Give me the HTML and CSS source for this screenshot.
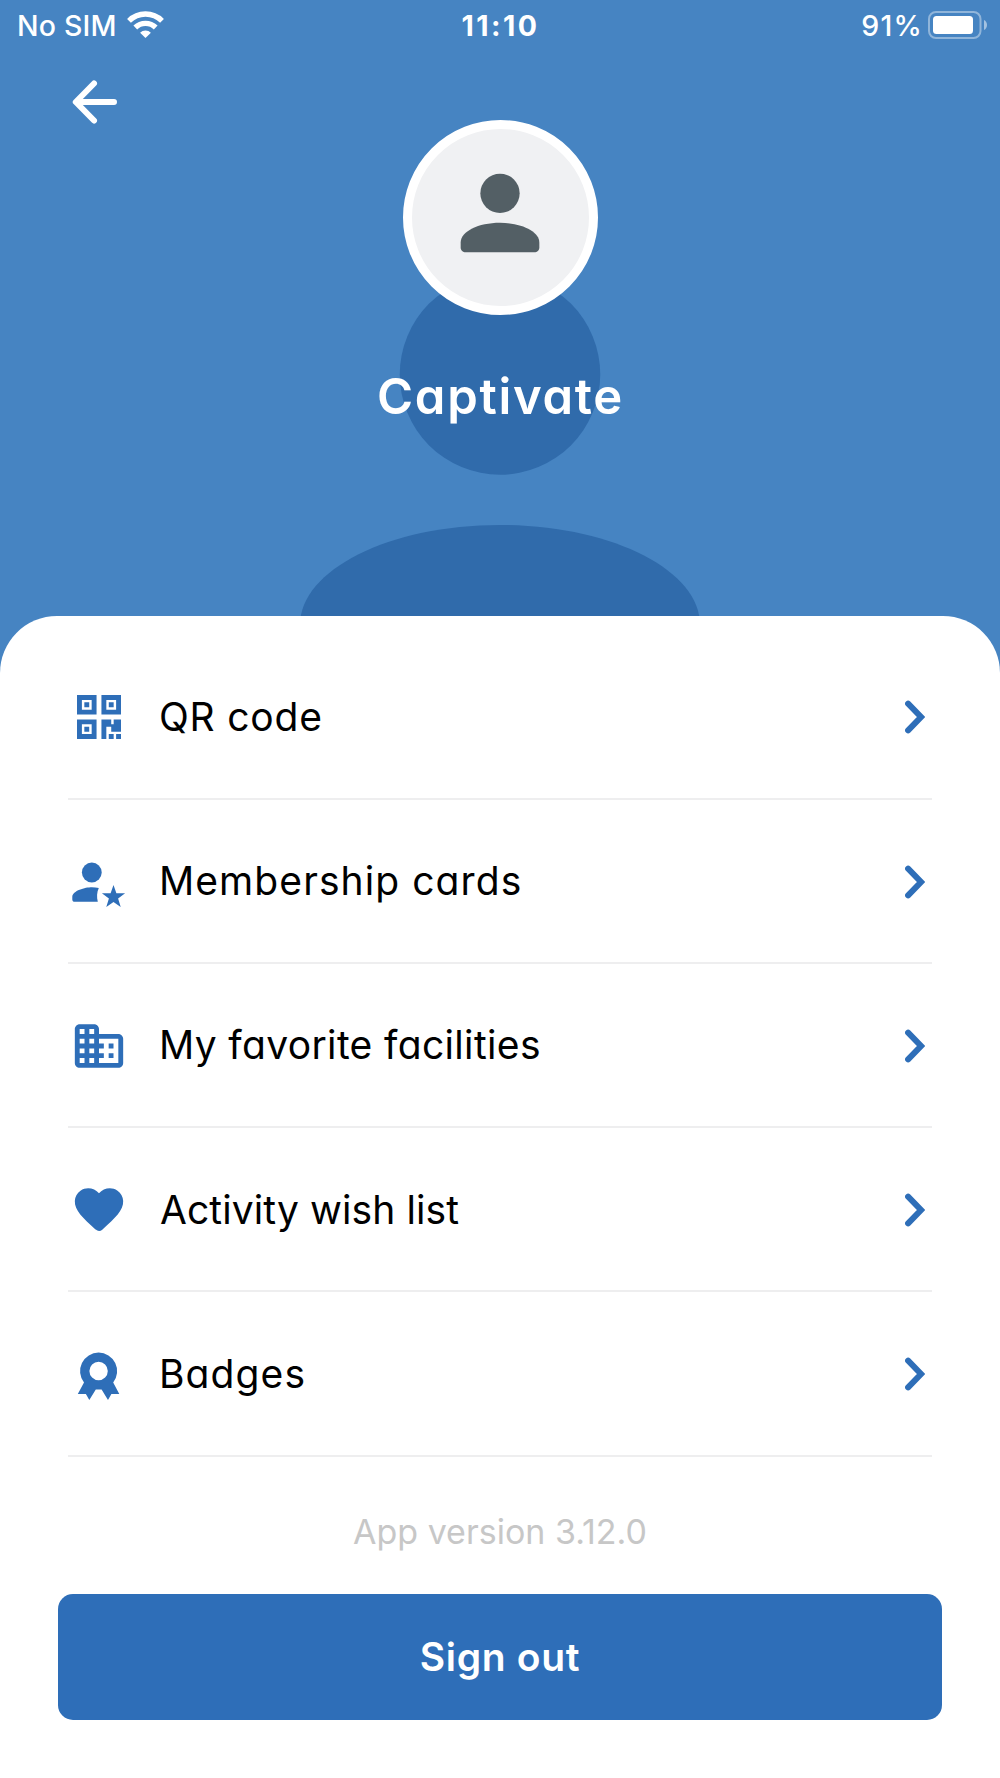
FILE: index.html
```
<!DOCTYPE html>
<html lang="en">
<head>
<meta charset="utf-8">
<title>Profile</title>
<link rel="stylesheet" href="styles.css">
</head>
<body>
<main class="screen">
  <header class="hero">
    <svg class="silhouette" viewBox="0 0 24 24" fill="currentColor"><circle cx="12" cy="7.980" r="4.010"/><path d="M4 18c0-2.210 3.580-4 8-4s8 1.790 8 4v1c0 .55-.45 1-1 1H5c-.55 0-1-.45-1-1z"/></svg>
    <div class="status">
      <div class="carrier">
        <span class="carrier-name">No SIM</span>
        <svg class="wifi" viewBox="0 0 37 27" fill="none" stroke="#fff" stroke-width="5.400">
          <path d="M2 9.800a23.400 23.400 0 0 1 33 0"/>
          <path d="M8.300 16.500a14.600 14.600 0 0 1 20.400 0"/>
          <path d="M18.500 27l-5.400-5.300a7.700 7.700 0 0 1 10.800 0z" fill="#fff" stroke="none"/>
        </svg>
      </div>
      <time class="clock">11:10</time>
      <div class="power">
        <span class="percent">91%</span>
        <svg class="battery" viewBox="0 0 60 28">
          <rect x="1" y="1" width="51.500" height="26" rx="7" fill="none" stroke="#fff" stroke-opacity=".4" stroke-width="2"/>
          <rect x="5" y="5" width="40" height="18" rx="3.500" fill="#fff"/>
          <path d="M56 9v10c1.900-.900 3-2.800 3-5s-1.100-4.100-3-5z" fill="#fff" fill-opacity=".5"/>
        </svg>
      </div>
    </div>
    <nav class="nav">
      <svg class="back" viewBox="0 0 50 50" fill="none" stroke="#fff" stroke-width="6" stroke-linecap="round"><path d="M23 6.500 4.800 25 23 43.500M5.500 25H43" stroke-linejoin="round"/></svg>
    </nav>
    <div class="avatar">
      <svg class="avatar-icon" viewBox="0 0 24 24" fill="currentColor"><circle cx="12" cy="8" r="4"/><path d="M4 18c0-2.210 3.580-4 8-4s8 1.790 8 4v1c0 .55-.45 1-1 1H5c-.55 0-1-.45-1-1z"/></svg>
    </div>
    <h1 class="name">Captivate</h1>
  </header>

  <section class="sheet">
    <ul class="menu">
      <li class="item">
        <span class="icon"><svg width="44" height="44" viewBox="0 0 18 18" fill="currentColor"><path fill-rule="evenodd" d="M0 0h8v8H0zM2 2v4h4V2zM3 3h2v2H3zM10 0h8v8h-8zM12 2v4h4V2zM13 3h2v2h-2zM0 10h8v8H0zM2 12v4h4v-4zM3 13h2v2H3zM10 10h4v2h1v-2h3v5h-4v-2h-2v5h-2zM13 16h2v2h-2zM16 16h2v2h-2z"/></svg></span>
        <span class="label label-qr">QR code</span>
        <svg class="chevron" viewBox="0 0 20 34"><path d="M3.100 3.700 16 17 3.100 30.300"/></svg>
      </li>
      <li class="item">
        <span class="icon"><svg width="60" height="60" viewBox="0 4 60 60" fill="currentColor"><circle cx="22.800" cy="24.500" r="9.900"/><path d="M22.800 39.200c2.300 0 4.700.3 7 .8-2 4.100-2.200 9.200-1 13.800H5.700c-1.400 0-2.400-1-2.400-2.400V49c0-6.500 13-9.800 19.500-9.800z"/><path d="m44.500 37 2.900 8.200 8.700.1-7 5.200 2.600 8.500-7.200-5-7.200 5 2.600-8.500-7-5.200 8.700-.1z"/></svg></span>
        <span class="label label-cards">Membership cards</span>
        <svg class="chevron" viewBox="0 0 20 34"><path d="M3.100 3.700 16 17 3.100 30.300"/></svg>
      </li>
      <li class="item">
        <span class="icon"><svg width="58" height="58" viewBox="0 0 24 24" fill="currentColor"><path d="M12 7V5c0-1.100-.9-2-2-2H4c-1.100 0-2 .9-2 2v14c0 1.100.9 2 2 2h16c1.100 0 2-.9 2-2V9c0-1.100-.9-2-2-2h-8zM6 19H4v-2h2v2zm0-4H4v-2h2v2zm0-4H4V9h2v2zm0-4H4V5h2v2zm4 12H8v-2h2v2zm0-4H8v-2h2v2zm0-4H8V9h2v2zm0-4H8V5h2v2zm10 12h-8v-2h2v-2h-2v-2h2v-2h-2V9h8v10zm-2-8h-2v2h2v-2zm0 4h-2v2h2v-2z"/></svg></span>
        <span class="label label-facilities">My favorite facilities</span>
        <svg class="chevron" viewBox="0 0 20 34"><path d="M3.100 3.700 16 17 3.100 30.300"/></svg>
      </li>
      <li class="item">
        <span class="icon"><svg width="58" height="58" viewBox="0 0 24 24" fill="currentColor"><path d="M13.350 20.130c-.76.69-1.930.69-2.690-.01l-.11-.1C5.300 15.270 1.870 12.160 2 8.280c.06-1.700.93-3.330 2.340-4.290 2.640-1.800 5.900-.96 7.660 1.100 1.760-2.060 5.020-2.910 7.660-1.100 1.410.96 2.280 2.590 2.340 4.290.14 3.880-3.300 6.990-8.550 11.760l-.1.090z"/></svg></span>
        <span class="label label-wish">Activity wish list</span>
        <svg class="chevron" viewBox="0 0 20 34"><path d="M3.100 3.700 16 17 3.100 30.300"/></svg>
      </li>
      <li class="item">
        <span class="icon"><svg width="60" height="60" viewBox="0 -.5 60 60" fill="currentColor"><path fill-rule="evenodd" d="M29.600 8.100A18.500 18.500 0 0 1 44.200 38l6.100 11.400-7.900.2-3.400 6L32.600 45h-5.800l-6.500 10.600-3.400-6-8.100-.2L15 38A18.500 18.500 0 0 1 29.600 8.100zm0 9.200a9.200 9.200 0 1 0 0 18.400 9.200 9.200 0 0 0 0-18.400z"/></svg></span>
        <span class="label label-badges">Badges</span>
        <svg class="chevron" viewBox="0 0 20 34"><path d="M3.100 3.700 16 17 3.100 30.300"/></svg>
      </li>
    </ul>
    <p class="version">App version 3.12.0</p>
    <button class="signout" type="button">Sign out</button>
  </section>
</main>
</body>
</html>
```
FILE: styles.css
```
* { box-sizing: border-box; }

body {
  margin: 0;
  background: #4684c2;
  font-family: Inter, "Liberation Sans", sans-serif;
  font-feature-settings: "cv11";
}

svg { display: block; flex: none; }

.screen {
  width: 1000px;
  height: 1778px;
  display: flex;
  flex-direction: column;
  overflow: hidden;
}

/* Header */
.hero {
  position: relative;
  height: 616px;
  flex: none;
  color: #fff;
  display: flex;
  flex-direction: column;
  align-items: center;
}

.silhouette {
  position: absolute;
  left: 200px;
  top: 175px;
  width: 600px;
  height: 600px;
  color: #306bab;
}

.status {
  width: 100%;
  height: 51px;
  padding: 0 13px 0 17px;
  display: grid;
  grid-template-columns: 1fr auto 1fr;
  align-items: center;
  font-size: 28.500px;
  font-weight: 500;
}

.carrier { display: flex; align-items: center; gap: 10px; }
.carrier-name { letter-spacing: .2px; }
.wifi { width: 37px; height: 27px; margin-top: -3px; }
.clock { font-weight: 700; letter-spacing: 2.500px; margin-left: -3px; }
.power { display: flex; align-items: center; justify-content: flex-end; gap: 5px; margin-right: -1px; }
.percent { letter-spacing: 1.200px; }
.battery { width: 60px; height: 28px; margin-top: -2px; }

.nav { width: 100%; height: 69px; padding: 25.500px 0 0 70.500px; }
.back { width: 50px; height: 50px; }

.avatar {
  position: relative;
  width: 195px;
  height: 195px;
  flex: none;
  border: 9px solid #fff;
  border-radius: 50%;
  background: #f0f1f3;
  color: #535f65;
  display: flex;
  justify-content: center;
  padding-top: 24.500px;
}
.avatar-icon { width: 118px; height: 118px; }

.name {
  position: relative;
  margin: 52px 0 0;
  padding-left: 1px;
  font-size: 49px;
  line-height: 60px;
  font-weight: 600;
  letter-spacing: 1.700px;
}

/* Sheet */
.sheet {
  position: relative;
  flex: 1;
  padding: 19.300px 58.300px 0;
  border-radius: 57px 57px 0 0;
  background: #fff;
  display: flex;
  flex-direction: column;
}

.menu { list-style: none; margin: 0 9.700px; padding: 0; color: #2e6eb8; }

.item {
  height: 164.250px;
  padding: 0 7px 0 1px;
  border-bottom: 2px solid #eeeeef;
  display: flex;
  align-items: center;
}

.icon { width: 60px; display: flex; justify-content: center; padding-top: 2px; }

.label {
  flex: 1;
  margin-left: 30px;
  font-size: 39px;
  color: #000;
}
.label-qr { letter-spacing: .8px; }
.label-cards { letter-spacing: 1.080px; }
.label-facilities { letter-spacing: .35px; }
.label-wish { letter-spacing: .1px; padding-left: 1px; }
.label-badges { letter-spacing: 1.100px; }

.chevron {
  width: 20px;
  height: 34px;
  margin-top: 2px;
  fill: none;
  stroke: #2e6eb8;
  stroke-width: 6;
  stroke-linecap: round;
}

.version {
  margin: 55.500px 0 42.300px;
  text-align: center;
  font-size: 34px;
  line-height: 40px;
  color: #c7c7c7;
}

.signout {
  height: 125.400px;
  padding: 0 0 2px;
  border: 0;
  border-radius: 15px;
  background: #2e6eb8;
  color: #fff;
  font: 600 39px Inter, "Liberation Sans", sans-serif;
  font-feature-settings: "cv11";
  letter-spacing: .7px;
}
```
